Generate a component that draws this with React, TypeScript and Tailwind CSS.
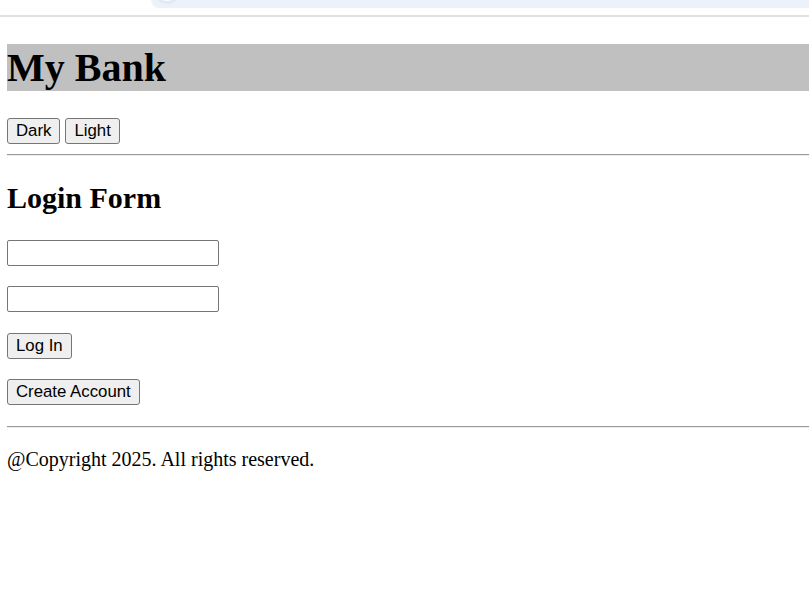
import React from 'react';

const serif = { fontFamily: '"Liberation Serif", "Times New Roman", serif' };

const btn =
  'h-[26px] px-[8px] border border-[#767676] bg-[#efefef] rounded-[3px] text-[16.8px] leading-none text-black font-["Liberation_Sans",Arial,sans-serif]';

const App: React.FC = () => {
  return (
    <div className="w-[809px] h-[607px] bg-white overflow-hidden" style={serif}>
      {/* browser chrome strip */}
      <div className="h-[15px]">
        <div className="relative ml-[151px] h-[8px] bg-[#edf1fa] rounded-bl-[12px] overflow-hidden">
          <div className="absolute left-[3px] -top-[22px] w-[26px] h-[26px] rounded-full border-[3px] border-[#e2e8f5] bg-white" />
        </div>
      </div>
      <div className="h-[2px] bg-[#e1e1e1]" />

      <div className="pl-[7px]">
        {/* Header */}
        <h1 className="mt-[27px] h-[47px] bg-[#c0c0c0] text-[40px] font-bold leading-[47px] text-black">
          My Bank
        </h1>

        {/* Theme buttons */}
        <div className="mt-[27px] flex gap-[5px]">
          <button className={btn}>Dark</button>
          <button className={btn}>Light</button>
        </div>

        <div className="mt-[10px] h-[1px] bg-[#9a9a9a]" />
        <div className="h-[1px] bg-[#eeeeee]" />

        {/* Login form */}
        <h2 className="mt-[25px] text-[30px] font-bold leading-[34px] text-black">Login Form</h2>

        <div className="mt-[25px] flex flex-col items-start">
          <input type="text" className="w-[212px] h-[26px] border border-[#767676] rounded-[2px] bg-white" />
          <input type="password" className="mt-[20px] w-[212px] h-[26px] border border-[#767676] rounded-[2px] bg-white" />
          <button className={`${btn} mt-[21px]`}>Log In</button>
          <button className={`${btn} mt-[20px]`}>Create Account</button>
        </div>

        <div className="mt-[21px] h-[1px] bg-[#9a9a9a]" />
        <div className="h-[1px] bg-[#eeeeee]" />

        {/* Footer */}
        <p className="mt-[20px] text-[20px] leading-[23px] text-black">@Copyright 2025. All rights reserved.</p>
      </div>
    </div>
  );
};

export default App;
